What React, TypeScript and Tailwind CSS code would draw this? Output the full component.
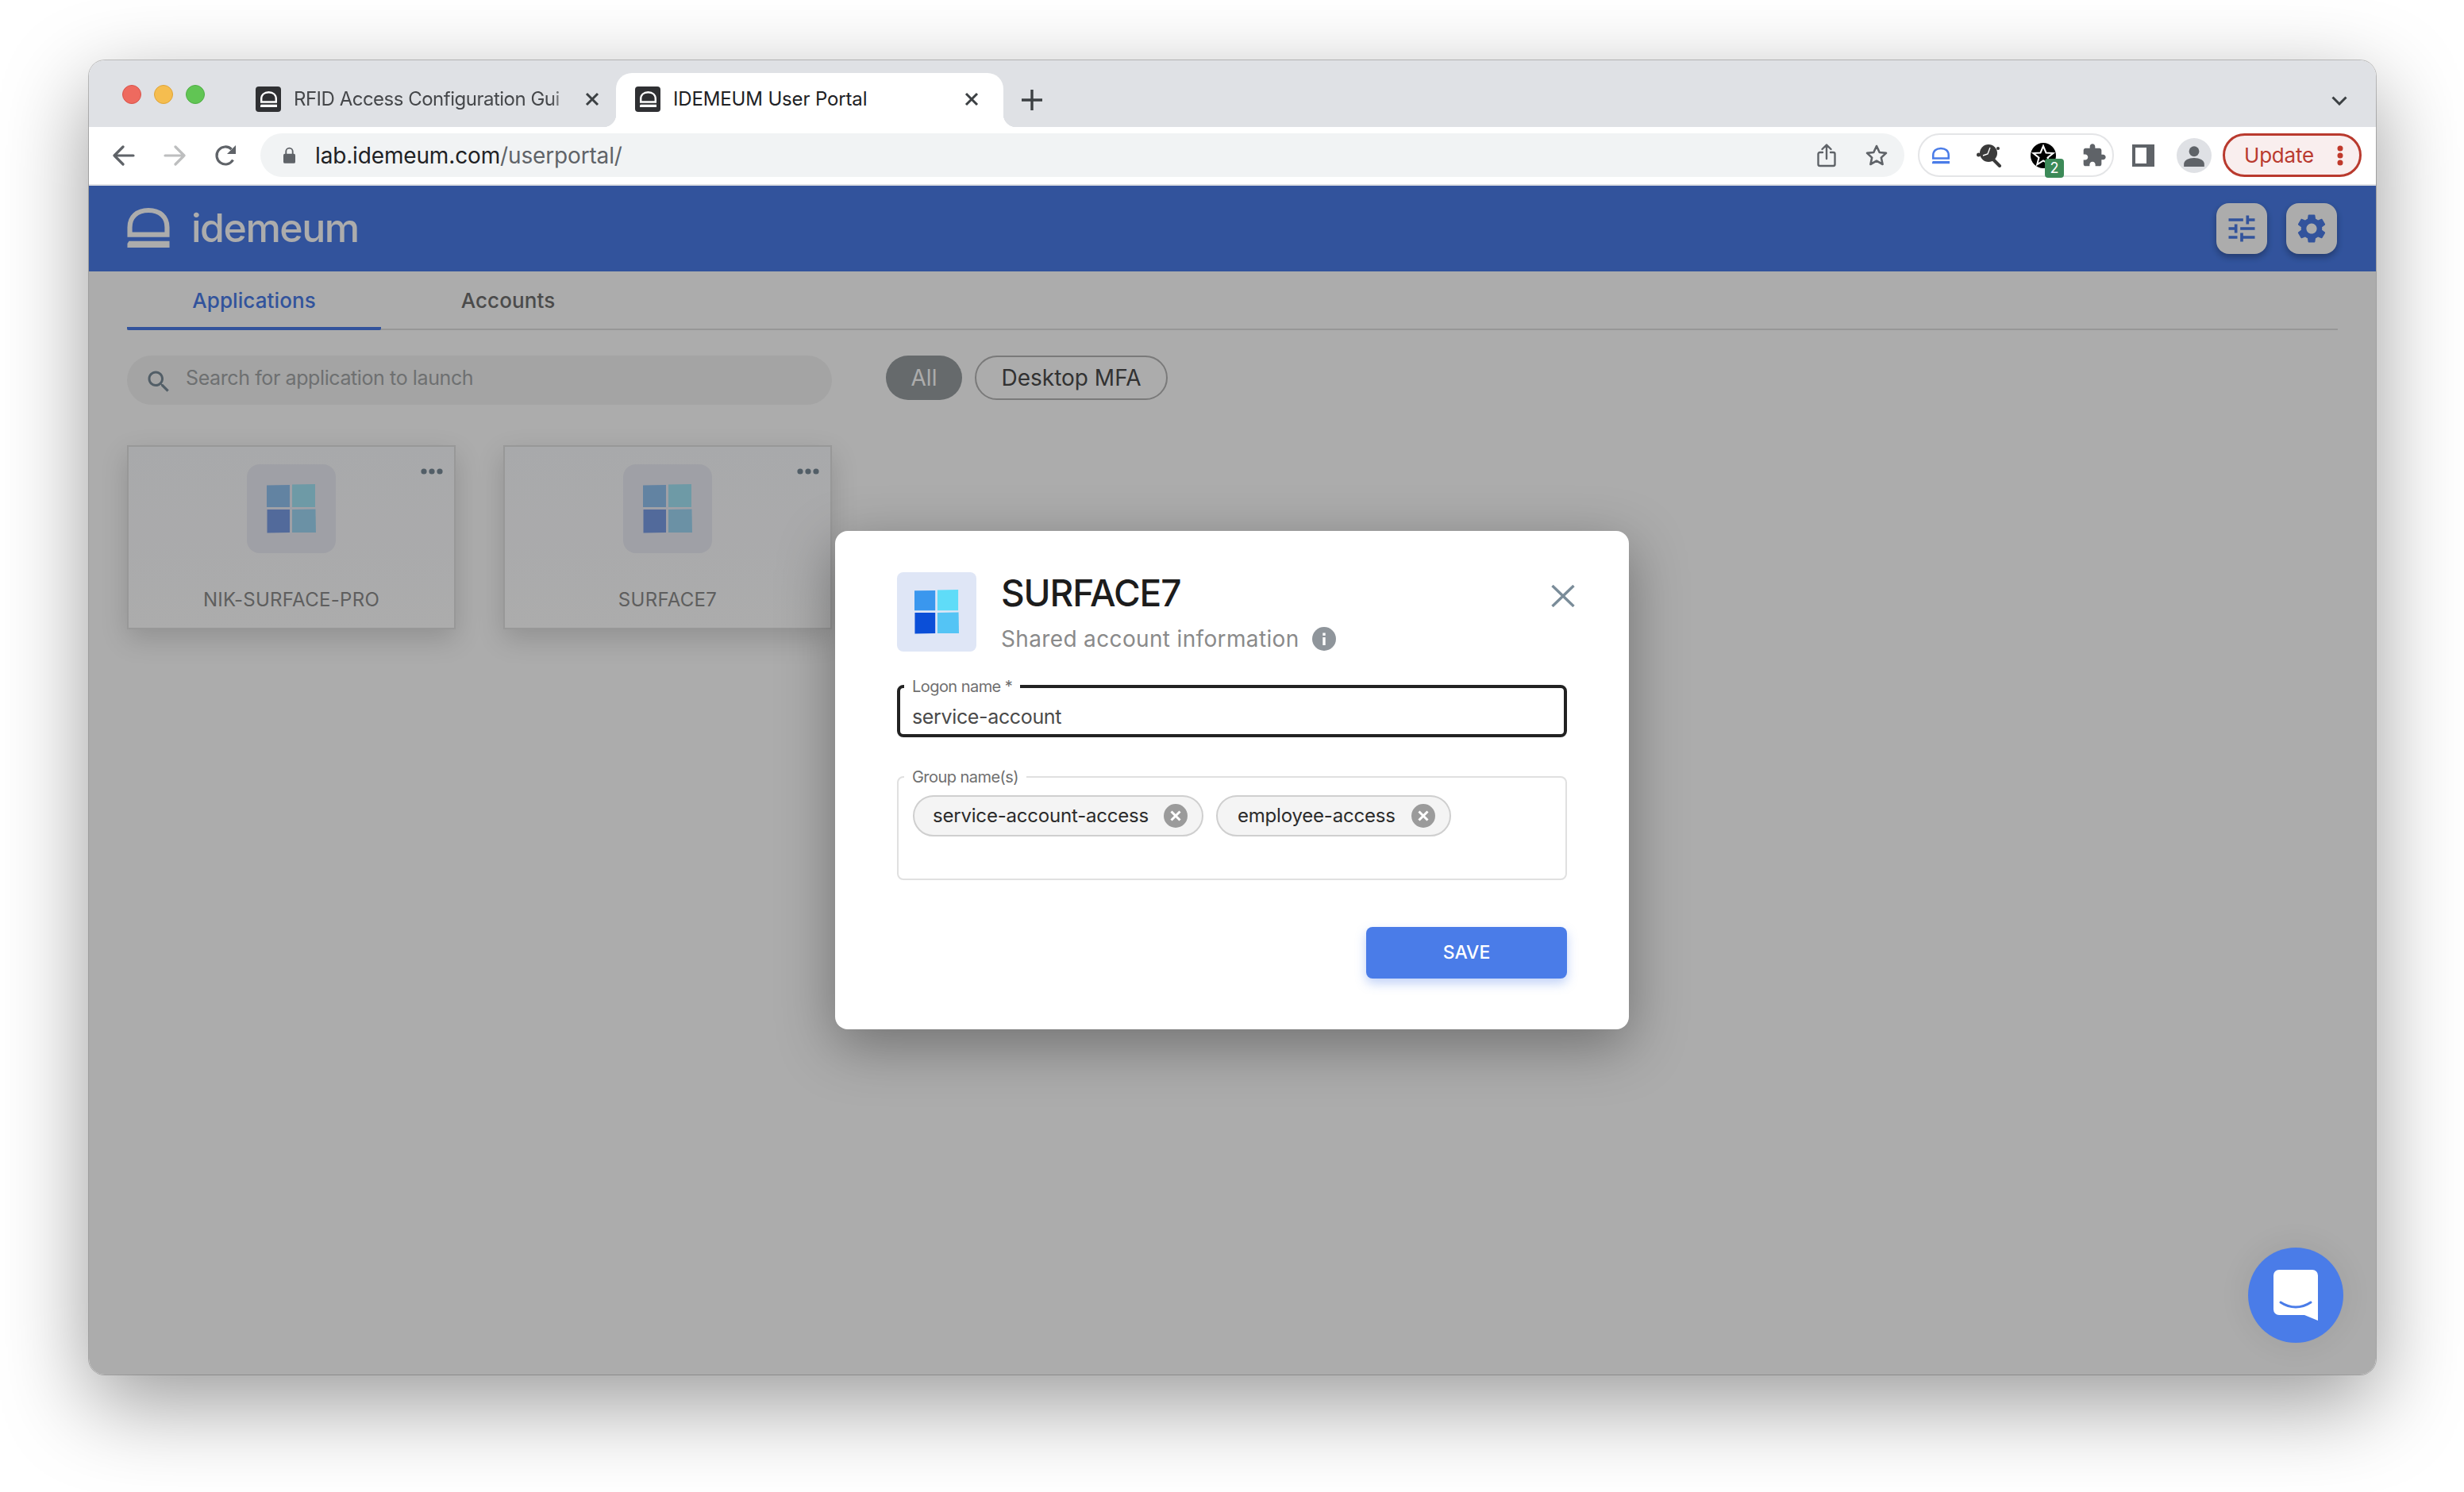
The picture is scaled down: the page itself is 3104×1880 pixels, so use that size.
import React from "react";

const Logo = ({ className }: { className: string }) => (
  <svg viewBox="0 0 52 49" className={className} fill="none">
    <path d="M3 33V24C3 11 12 3 26 3s23 8 23 21v9Z" stroke="currentColor" strokeWidth="6" />
    <path d="M2 41h50v8H0v-5Z" fill="currentColor" />
  </svg>
);

const Fav = () => (
  <span className="w-[32px] h-[32px] rounded-[4px] bg-[#2f3033] flex items-center justify-center shrink-0">
    <Logo className="w-[21px] h-[24px] text-white" />
  </span>
);

const TabX = ({ className }: { className: string }) => (
  <svg viewBox="0 0 18 18" className={className} fill="none" stroke="#3c4043" strokeWidth="3">
    <path d="M2 2l14 14M16 2 2 16" />
  </svg>
);

const Win = ({ className, colors }: { className: string; colors: string[] }) => (
  <svg viewBox="0 0 62 62" className={className}>
    <polygon points="0,1.5 29,1 29,29 0,29" fill={colors[0]} />
    <polygon points="32,0.5 61,0 61,29 32,29" fill={colors[1]} />
    <polygon points="0.5,32 29,32 29,61 0.5,61.5" fill={colors[2]} />
    <polygon points="32,32 61.5,31.5 62,61 32,61" fill={colors[3]} />
  </svg>
);

const winColors = ["#3a97ee", "#5fdcf8", "#0b4fd8", "#54c4f5"];

const Card = ({ name }: { name: string }) => (
  <div className="relative w-[414px] h-[232px] border-2 border-[#e2e2e2] bg-gradient-to-b from-[#fafbfe] to-white shadow-[0_12px_32px_rgba(0,0,0,0.16)] flex flex-col items-center pt-[22px]">
    <div className="w-[112px] h-[112px] rounded-[16px] bg-[#eceef6] flex items-center justify-center">
      <Win className="w-[62px] h-[62px] opacity-50" colors={winColors} />
    </div>
    <svg viewBox="0 0 28 8" className="absolute top-[27px] right-[14px] w-[28px] h-[8px]" fill="#7a8c99">
      <circle cx="4" cy="4" r="3.6" />
      <circle cx="14" cy="4" r="3.6" />
      <circle cx="24" cy="4" r="3.6" />
    </svg>
    <div className="mt-[44px] text-[24px] leading-[30px] tracking-[0.3px] text-[#8c8c8c]">{name}</div>
  </div>
);

const ChipX = () => (
  <svg viewBox="0 0 30 30" className="w-[30px] h-[30px] shrink-0">
    <circle cx="15" cy="15" r="15" fill="#9b9b9b" />
    <path d="M9.5 9.5l11 11M20.5 9.5l-11 11" stroke="#fff" strokeWidth="3" fill="none" />
  </svg>
);

export default function App() {
  return (
    <div className="w-[3104px] h-[1880px] bg-white pt-[76px] pl-[112px] font-['Inter',sans-serif] overflow-hidden">
      <div className="relative w-[2881px] h-[1656px] rounded-[20px] overflow-hidden shadow-[0_0_0_1px_rgba(0,0,0,0.22),0_36px_110px_rgba(0,0,0,0.4)] flex flex-col">
        {/* tab strip */}
        <div className="h-[84px] shrink-0 bg-[#dfe1e5] flex items-end relative">
          <div className="flex gap-[16px] self-start mt-[31px] ml-[42px] w-[198px] shrink-0">
            <span className="w-[24px] h-[24px] rounded-full bg-[#ee6a5f] border border-[#d9534a]" />
            <span className="w-[24px] h-[24px] rounded-full bg-[#f5bd4f] border border-[#dfa437]" />
            <span className="w-[24px] h-[24px] rounded-full bg-[#61c554] border border-[#4fae45]" />
          </div>
          <div className="h-[68px] w-[454px] shrink-0 flex items-center -ml-[30px] pb-[2px]">
            <Fav />
            <span className="ml-[16px] w-[352px] whitespace-nowrap overflow-hidden text-[24px] tracking-[-0.5px] text-[#45474a] [mask-image:linear-gradient(to_right,black_92%,transparent)]">
              RFID Access Configuration Gui
            </span>
            <TabX className="w-[18px] h-[18px] ml-[15px] shrink-0" />
          </div>
          <div className="relative h-[68px] w-[488px] shrink-0 bg-white rounded-t-[20px] flex items-center pl-[24px] pb-[2px] before:content-[''] before:absolute before:bottom-0 before:-left-[16px] before:w-[16px] before:h-[16px] before:bg-[radial-gradient(circle_at_0_0,transparent_16px,white_16.5px)] after:content-[''] after:absolute after:bottom-0 after:-right-[16px] after:w-[16px] after:h-[16px] after:bg-[radial-gradient(circle_at_100%_0,transparent_16px,white_16.5px)]">
            <Fav />
            <span className="ml-[16px] text-[24px] tracking-[-0.15px] text-[#202124] whitespace-nowrap">IDEMEUM User Portal</span>
            <TabX className="w-[18px] h-[18px] ml-auto mr-[31px]" />
          </div>
          <svg viewBox="0 0 26 26" className="w-[26px] h-[26px] ml-[23px] mb-[21px] shrink-0" stroke="#3c4043" strokeWidth="3.4" fill="none">
            <path d="M13 0v26M0 13h26" />
          </svg>
          <svg viewBox="0 0 20 12" className="w-[20px] h-[12px] ml-auto mr-[36px] mb-[27px]" stroke="#3c4043" strokeWidth="3" fill="none">
            <path d="M1.5 1.5 10 10l8.5-8.5" />
          </svg>
        </div>

        {/* toolbar */}
        <div className="h-[74px] shrink-0 bg-white border-b-2 border-[#dfe1e5] flex items-start pt-[8px]">
          <div className="w-[216px] shrink-0 flex items-center h-[55px] pl-[30px] gap-[36px]">
            <svg viewBox="0 0 28 26" className="w-[28px] h-[26px]" fill="none" stroke="#5f6368" strokeWidth="3.2" strokeLinecap="round" strokeLinejoin="round">
              <path d="M26 13H2M13 2 2 13l11 11" />
            </svg>
            <svg viewBox="0 0 28 26" className="w-[28px] h-[26px]" fill="none" stroke="#bdbebf" strokeWidth="3.2" strokeLinecap="round" strokeLinejoin="round">
              <path d="M2 13h24M15 2l11 11-11 11" />
            </svg>
            <svg viewBox="0 0 28 28" className="w-[28px] h-[28px]">
              <path d="M23.5 19.5A11 11 0 1 1 21.6 6" fill="none" stroke="#5f6368" strokeWidth="3.2" />
              <path d="M27 1v11H16Z" fill="#5f6368" />
            </svg>
          </div>
          <div className="w-[2071px] h-[55px] shrink-0 rounded-[28px] bg-[#f1f3f4] flex items-center pl-[29px] pr-[20px]">
            <svg viewBox="0 0 16 22" className="w-[15px] h-[21px] shrink-0">
              <path d="M3.5 10V6a4.5 4.5 0 0 1 9 0v4" fill="none" stroke="#5f6368" strokeWidth="2" />
              <rect x="0" y="9" width="16" height="13" rx="2" fill="#5f6368" />
            </svg>
            <span className="ml-[25px] text-[28px] tracking-[-0.15px] text-[#202124] whitespace-nowrap">
              lab.idemeum.com<span className="text-[#5f6368]">/userportal/</span>
            </span>
            <svg viewBox="0 0 24 30" className="ml-auto w-[24px] h-[30px]" fill="none" stroke="#5f6368" strokeWidth="2.4" strokeLinecap="round" strokeLinejoin="round">
              <path d="M7 11H3.5a2 2 0 0 0-2 2v13a2 2 0 0 0 2 2h17a2 2 0 0 0 2-2V13a2 2 0 0 0-2-2H17M12 19V2M6.5 7 12 1.5 17.500 7" />
            </svg>
            <svg viewBox="0 0 30 30" className="ml-[36px] w-[30px] h-[30px]" fill="none" stroke="#5f6368" strokeWidth="2.6" strokeLinejoin="round">
              <path d="m15 3 3.700 8 8.300.9-6.200 5.700 1.800 8.400-7.600-4.300L7.400 26l1.800-8.400L3 11.900l8.300-.9Z" />
            </svg>
          </div>
          <div className="relative w-[247px] h-[55px] ml-[17px] shrink-0 rounded-[28px] border-2 border-[#e4e5e7] flex items-center pl-[16px] gap-[36px]">
            <Logo className="w-[22px] h-[28px] text-[#4a7ce8] shrink-0" />
            <svg viewBox="0 0 32 30" className="w-[32px] h-[30px] -ml-[2px] shrink-0">
              <circle cx="15" cy="12" r="11" fill="#3a3a3a" />
              <path d="M20 19l9 9" stroke="#3a3a3a" strokeWidth="4" strokeLinecap="round" />
              <circle cx="2.500" cy="14" r="2.500" fill="#3a3a3a" />
              <circle cx="27" cy="6" r="2" fill="#3a3a3a" />
              <path d="M8 15l6-2 3-8" stroke="#fff" strokeWidth="1.400" fill="none" />
            </svg>
            <svg viewBox="0 0 32 32" className="w-[32px] h-[32px] shrink-0">
              <circle cx="16" cy="16" r="16" fill="#000" />
              <path d="m16 4 3.500 8.500 9 .5-7 5.600 2.300 8.700L16 22.400 8.200 27.300 10.500 18.600 3.500 13l9-.5Z" fill="none" stroke="#fff" strokeWidth="2" />
            </svg>
            <svg viewBox="0 0 24 24" className="w-[32px] h-[32px] shrink-0 -ml-[4px]" fill="#5f6368">
              <path d="M20.500 11H19V7c0-1.100-.9-2-2-2h-4V3.500C13 2.120 11.880 1 10.500 1S8 2.120 8 3.500V5H4c-1.100 0-1.990.9-1.990 2v3.800H3.500c1.490 0 2.700 1.210 2.700 2.700s-1.210 2.700-2.700 2.700H2V20c0 1.100.9 2 2 2h3.800v-1.500c0-1.490 1.210-2.700 2.700-2.700 1.490 0 2.700 1.210 2.700 2.700V22H17c1.100 0 2-.9 2-2v-4h1.500c1.380 0 2.500-1.120 2.500-2.500S21.880 11 20.500 11z" />
            </svg>
            <span className="absolute left-[158px] top-[30px] w-[24px] h-[24px] rounded-[4px] bg-[#3c8a58] text-white text-[18px] leading-[24px] text-center">2</span>
          </div>
          <div className="w-[28px] h-[28px] ml-[23px] mt-[14px] shrink-0 border-[4px] border-r-[10px] border-[#5f6368]" />
          <div className="w-[44px] h-[44px] ml-[28px] mt-[6px] shrink-0 rounded-full bg-[#dfe1e5] flex items-center justify-center">
            <svg viewBox="0 0 24 24" className="w-[28px] h-[30px]" fill="#5f6368">
              <circle cx="12" cy="7.500" r="5.500" />
              <path d="M1 24v-3c0-4 5-6.500 11-6.500S23 17 23 21v3Z" />
            </svg>
          </div>
          <div className="w-[175px] h-[55px] ml-[14px] shrink-0 rounded-[28px] border-[3px] border-[#b93a2e] bg-[#f9eeee] flex items-center pl-[24px] pr-[20px]">
            <span className="text-[26px] text-[#b93a2e] tracking-[-0.2px]">Update</span>
            <svg viewBox="0 0 8 26" className="ml-auto w-[8px] h-[26px]" fill="#c0392b">
              <circle cx="4" cy="4" r="3.500" />
              <circle cx="4" cy="13" r="3.500" />
              <circle cx="4" cy="22" r="3.500" />
            </svg>
          </div>
        </div>

        {/* page */}
        <div className="relative flex-1 bg-white flex flex-col">
          <div className="h-[108px] shrink-0 bg-[#4a7ce8] flex items-center pl-[48px] pr-[49px]">
            <Logo className="w-[54px] h-[50px] text-white -mt-[2px]" />
            <span className="ml-[27px] text-[50px] font-medium tracking-[-1.5px] text-white leading-none -mt-[2px]">idemeum</span>
            <div className="ml-auto flex gap-[24px]">
              <div className="w-[64px] h-[64px] rounded-[16px] bg-white shadow-[0_4px_8px_rgba(0,0,0,0.3)] flex items-center justify-center">
                <svg viewBox="0 0 24 24" className="w-[44px] h-[44px]" fill="#4a7ce8">
                  <path d="M3 17v2h6v-2H3zM3 5v2h10V5H3zm10 16v-2h8v-2h-8v-2h-2v6h2zM7 9v2H3v2h4v2h2V9H7zm14 4v-2H11v2h10zm-6-4h2V7h4V5h-4V3h-2v6z" />
                </svg>
              </div>
              <div className="w-[64px] h-[64px] rounded-[16px] bg-white shadow-[0_4px_8px_rgba(0,0,0,0.3)] flex items-center justify-center">
                <svg viewBox="0 0 24 24" className="w-[44px] h-[44px]" fill="#4a7ce8">
                  <path d="M19.140 12.940c.04-.3.06-.61.06-.94 0-.32-.02-.64-.07-.94l2.030-1.580c.18-.14.23-.41.12-.61l-1.920-3.320c-.12-.22-.37-.29-.59-.22l-2.390.96c-.5-.38-1.030-.7-1.620-.94l-.36-2.540c-.04-.24-.24-.41-.48-.41h-3.840c-.24 0-.43.17-.47.41l-.36 2.540c-.59.24-1.130.57-1.620.94l-2.390-.96c-.22-.08-.47 0-.59.22L2.740 8.870c-.12.21-.08.47.12.61l2.030 1.580c-.05.3-.09.63-.09.94s.02.64.07.94l-2.030 1.580c-.18.14-.23.41-.12.61l1.920 3.320c.12.22.37.29.59.22l2.390-.96c.5.38 1.030.7 1.620.94l.36 2.540c.05.24.24.41.48.41h3.840c.24 0 .44-.17.47-.41l.36-2.540c.59-.24 1.130-.56 1.620-.94l2.390.96c.22.08.47 0 .59-.22l1.920-3.320c.12-.22.07-.47-.12-.61l-2.010-1.580zM12 15.600c-1.980 0-3.600-1.620-3.600-3.600s1.620-3.600 3.600-3.600 3.600 1.620 3.600 3.600-1.620 3.600-3.600 3.600z" />
                </svg>
              </div>
            </div>
          </div>

          <div className="px-[48px] pt-[16px] flex flex-col">
            <div className="flex border-b-2 border-[#e0e0e0] h-[58px]">
              <div className="w-[320px] h-[58px] border-b-4 border-[#4a7ce8] rounded-b-[2px] flex items-center justify-center pb-[14px] text-[26px] tracking-[0.1px] font-medium text-[#4a7ce8]">Applications</div>
              <div className="w-[320px] h-[58px] flex items-center justify-center pb-[18px] text-[26px] tracking-[0.1px] font-medium text-[#6f6f6f]">Accounts</div>
            </div>
            <div className="flex items-center mt-[32px] h-[62px]">
              <div className="w-[888px] h-[62px] rounded-[31px] bg-[#f4f4f4] flex items-center pl-[22px]">
                <svg viewBox="0 0 24 24" className="w-[36px] h-[36px] mt-[4px] shrink-0" fill="#7a8c99">
                  <path d="M15.500 14h-.79l-.28-.27C15.410 12.590 16 11.110 16 9.500 16 5.910 13.090 3 9.500 3S3 5.910 3 9.500 5.910 16 9.500 16c1.610 0 3.090-.59 4.230-1.570l.27.28v.79l5 4.990L20.490 19l-4.990-5zm-6 0C7.010 14 5 11.990 5 9.500S7.010 5 9.500 5 14 7.010 14 9.500 11.990 14 9.500 14z" />
                </svg>
                <span className="ml-[16px] text-[25px] tracking-[-0.4px] text-[#a3a6a8] -mt-[4px]">Search for application to launch</span>
              </div>
              <div className="ml-[68px] w-[96px] h-[56px] rounded-[28px] bg-[#979da0] text-white flex items-center justify-center text-[28px] -mt-[6px]">All</div>
              <div className="ml-[16px] w-[243px] h-[56px] rounded-[28px] border-2 border-[#b5b5b5] text-[#4a4a4a] flex items-center justify-center text-[28px] -mt-[6px]">Desktop MFA</div>
            </div>
            <div className="flex gap-[60px] mt-[51px]">
              <Card name="NIK-SURFACE-PRO" />
              <Card name="SURFACE7" />
            </div>
          </div>

          <div className="absolute inset-0 bg-black/[0.325]" />

          <div className="absolute left-[2720px] top-[1338px] w-[120px] h-[120px] rounded-full bg-[#4a7ce8] shadow-[0_0_40px_rgba(0,0,0,0.08)] flex items-center justify-center">
            <svg viewBox="0 0 56 64" className="w-[56px] h-[64px]">
              <path d="M7 0h42a7 7 0 0 1 7 7v57l-17-7H7a7 7 0 0 1-7-7V7a7 7 0 0 1 7-7Z" fill="#fff" />
              <path d="M9 41c12 8 26 8 38 0" fill="none" stroke="#4a7ce8" strokeWidth="3" strokeLinecap="round" />
            </svg>
          </div>

          {/* modal */}
          <div className="absolute left-[940px] top-[435px] w-[1000px] h-[628px] bg-white rounded-[16px] shadow-[0_20px_70px_rgba(0,0,0,0.35)] pt-[52px] px-[78px] flex flex-col">
            <div className="flex h-[100px] shrink-0 relative">
              <div className="w-[100px] h-[100px] rounded-[8px] bg-[#dfe6f6] flex items-center justify-center shrink-0">
                <Win className="w-[56px] h-[56px]" colors={winColors} />
              </div>
              <div className="ml-[31px] flex flex-col">
                <div className="text-[46px] leading-[52px] tracking-[-1.1px] font-medium text-[#1c1c1c]">SURFACE7</div>
                <div className="mt-[14px] flex items-center">
                  <span className="text-[28px] tracking-[0.35px] leading-[36px] text-[#8a8a8a]">Shared account information</span>
                  <svg viewBox="0 0 30 30" className="w-[30px] h-[30px] ml-[16px]">
                    <circle cx="15" cy="15" r="15" fill="#8f959b" />
                    <rect x="13.300" y="13" width="3.400" height="10" fill="#fff" />
                    <rect x="13.300" y="7.500" width="3.400" height="3.400" fill="#fff" />
                  </svg>
                </div>
              </div>
              <svg viewBox="0 0 30 28" className="ml-auto mr-[-10px] mt-[16px] w-[30px] h-[28px]" stroke="#7a8c99" strokeWidth="3.400" fill="none">
                <path d="M1.500 1 28.500 27M28.500 1 1.500 27" />
              </svg>
            </div>
            <fieldset className="mt-[32px] h-[76px] shrink-0 border-[4px] border-[#222222] rounded-[8px] pl-[15px]">
              <legend className="-ml-[10px] px-[10px] text-[20px] leading-[24px] tracking-[-0.55px] text-[#6f6f6f]">Logon name *</legend>
              <div className="mt-[10px] text-[25px] leading-[32px] tracking-[-0.35px] text-[#4a4a4a]">service-account</div>
            </fieldset>
            <fieldset className="mt-[38px] h-[142px] shrink-0 border-2 border-[#e0e0e0] rounded-[8px] px-[18px]">
              <legend className="-ml-[11px] px-[10px] text-[20px] leading-[24px] tracking-[-0.55px] text-[#6f6f6f]">Group name(s)</legend>
              <div className="flex gap-[16px] mt-[11px]">
                <div className="h-[52px] w-[366px] rounded-[26px] border-2 border-[#cfcfcf] bg-[#f4f4f4] flex items-center pl-[23px] pr-[18px] justify-between">
                  <span className="text-[24px] tracking-[-0.2px] text-[#2b2b2b]">service-account-access</span>
                  <ChipX />
                </div>
                <div className="h-[52px] w-[296px] rounded-[26px] border-2 border-[#cfcfcf] bg-[#f4f4f4] flex items-center pl-[25px] pr-[18px] justify-between">
                  <span className="text-[24px] tracking-[-0.2px] text-[#2b2b2b]">employee-access</span>
                  <ChipX />
                </div>
              </div>
            </fieldset>
            <div className="mt-[59px] self-end w-[253px] h-[65px] rounded-[8px] bg-[#4a7ce8] shadow-[0_6px_14px_rgba(74,124,232,0.35)] flex items-center justify-center text-white text-[23px] font-medium">SAVE</div>
          </div>
        </div>
      </div>
    </div>
  );
}
